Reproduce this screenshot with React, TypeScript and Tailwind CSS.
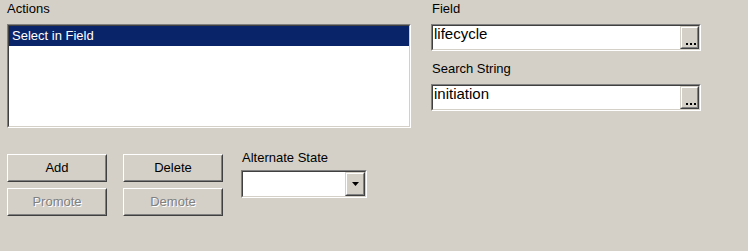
import React from "react";

function Sunken({ className, children }: { className: string; children?: React.ReactNode }) {
  return (
    <div className={`border border-t-[#808080] border-l-[#808080] border-r-white border-b-white ${className}`}>
      <div className="w-full h-full border border-t-[#404040] border-l-[#404040] border-r-[#d4d0c8] border-b-[#d4d0c8] bg-white flex">
        {children}
      </div>
    </div>
  );
}

function Btn({ label, disabled }: { label: string; disabled?: boolean }) {
  return (
    <div className="w-[100px] h-[28px] border border-t-white border-l-white border-r-[#404040] border-b-[#404040]">
      <div className="w-full h-full border border-t-[#d4d0c8] border-l-[#d4d0c8] border-r-[#808080] border-b-[#808080] flex items-center justify-center pb-[2px]">
        {disabled ? (
          <span className="text-[#808080] [text-shadow:1px_1px_0_#ffffff]">{label}</span>
        ) : (
          <span className="text-black">{label}</span>
        )}
      </div>
    </div>
  );
}

function SmallBtn({ className, children }: { className: string; children?: React.ReactNode }) {
  return (
    <div className={`border border-t-[#d4d0c8] border-l-[#d4d0c8] border-r-[#404040] border-b-[#404040] ${className}`}>
      <div className="w-full h-full border border-t-white border-l-white border-r-[#808080] border-b-[#808080] bg-[#d4d0c8] relative">
        {children}
      </div>
    </div>
  );
}

function Ellipsis() {
  return (
    <div className="absolute left-[4px] bottom-[2px] flex gap-[2px]">
      <div className="w-[2px] h-[2px] bg-black" />
      <div className="w-[2px] h-[2px] bg-black" />
      <div className="w-[2px] h-[2px] bg-black" />
    </div>
  );
}

function TextBox({ value }: { value: string }) {
  return (
    <Sunken className="w-[270px] h-[27px]">
      <div className="flex-1 pl-px text-[15px] leading-[16px] text-black">{value}</div>
      <SmallBtn className="w-[19px] h-[23px]">
        <Ellipsis />
      </SmallBtn>
    </Sunken>
  );
}

export default function App() {
  return (
    <div className="w-[748px] h-[251px] bg-[#d4d0c8] flex font-['Liberation_Sans',Arial,sans-serif] text-[13px] leading-[15px] text-black overflow-hidden">
      <div className="w-[411px] pl-[7px] pt-px flex flex-col">
        <div>Actions</div>
        <Sunken className="mt-[8px] w-[404px] h-[104px]">
          <div className="flex-1 flex flex-col">
            <div className="h-[20px] leading-[20px] bg-[#0a246a] text-white pl-[3px]">Select in Field</div>
          </div>
        </Sunken>
        <div className="mt-[22px] flex items-start">
          <div className="pt-[4px] grid grid-cols-[100px_100px] gap-x-[16px] gap-y-[6px]">
            <Btn label="Add" />
            <Btn label="Delete" />
            <Btn label="Promote" disabled />
            <Btn label="Demote" disabled />
          </div>
          <div className="ml-[18px] flex flex-col">
            <div className="pl-px">Alternate State</div>
            <Sunken className="mt-[5px] w-[126px] h-[28px]">
              <div className="flex-1" />
              <SmallBtn className="w-[20px] h-[24px]">
                <div className="absolute inset-0 flex items-center justify-center">
                  <svg width="7" height="4" viewBox="0 0 7 4">
                    <path d="M0 0H7L3.5 4Z" fill="#000" />
                  </svg>
                </div>
              </SmallBtn>
            </Sunken>
          </div>
        </div>
      </div>
      <div className="ml-[20px] pt-px flex flex-col">
        <div className="pl-px">Field</div>
        <div className="mt-[8px]">
          <TextBox value="lifecycle" />
        </div>
        <div className="mt-[10px] pl-px">Search String</div>
        <div className="mt-[8px]">
          <TextBox value="initiation" />
        </div>
      </div>
    </div>
  );
}
